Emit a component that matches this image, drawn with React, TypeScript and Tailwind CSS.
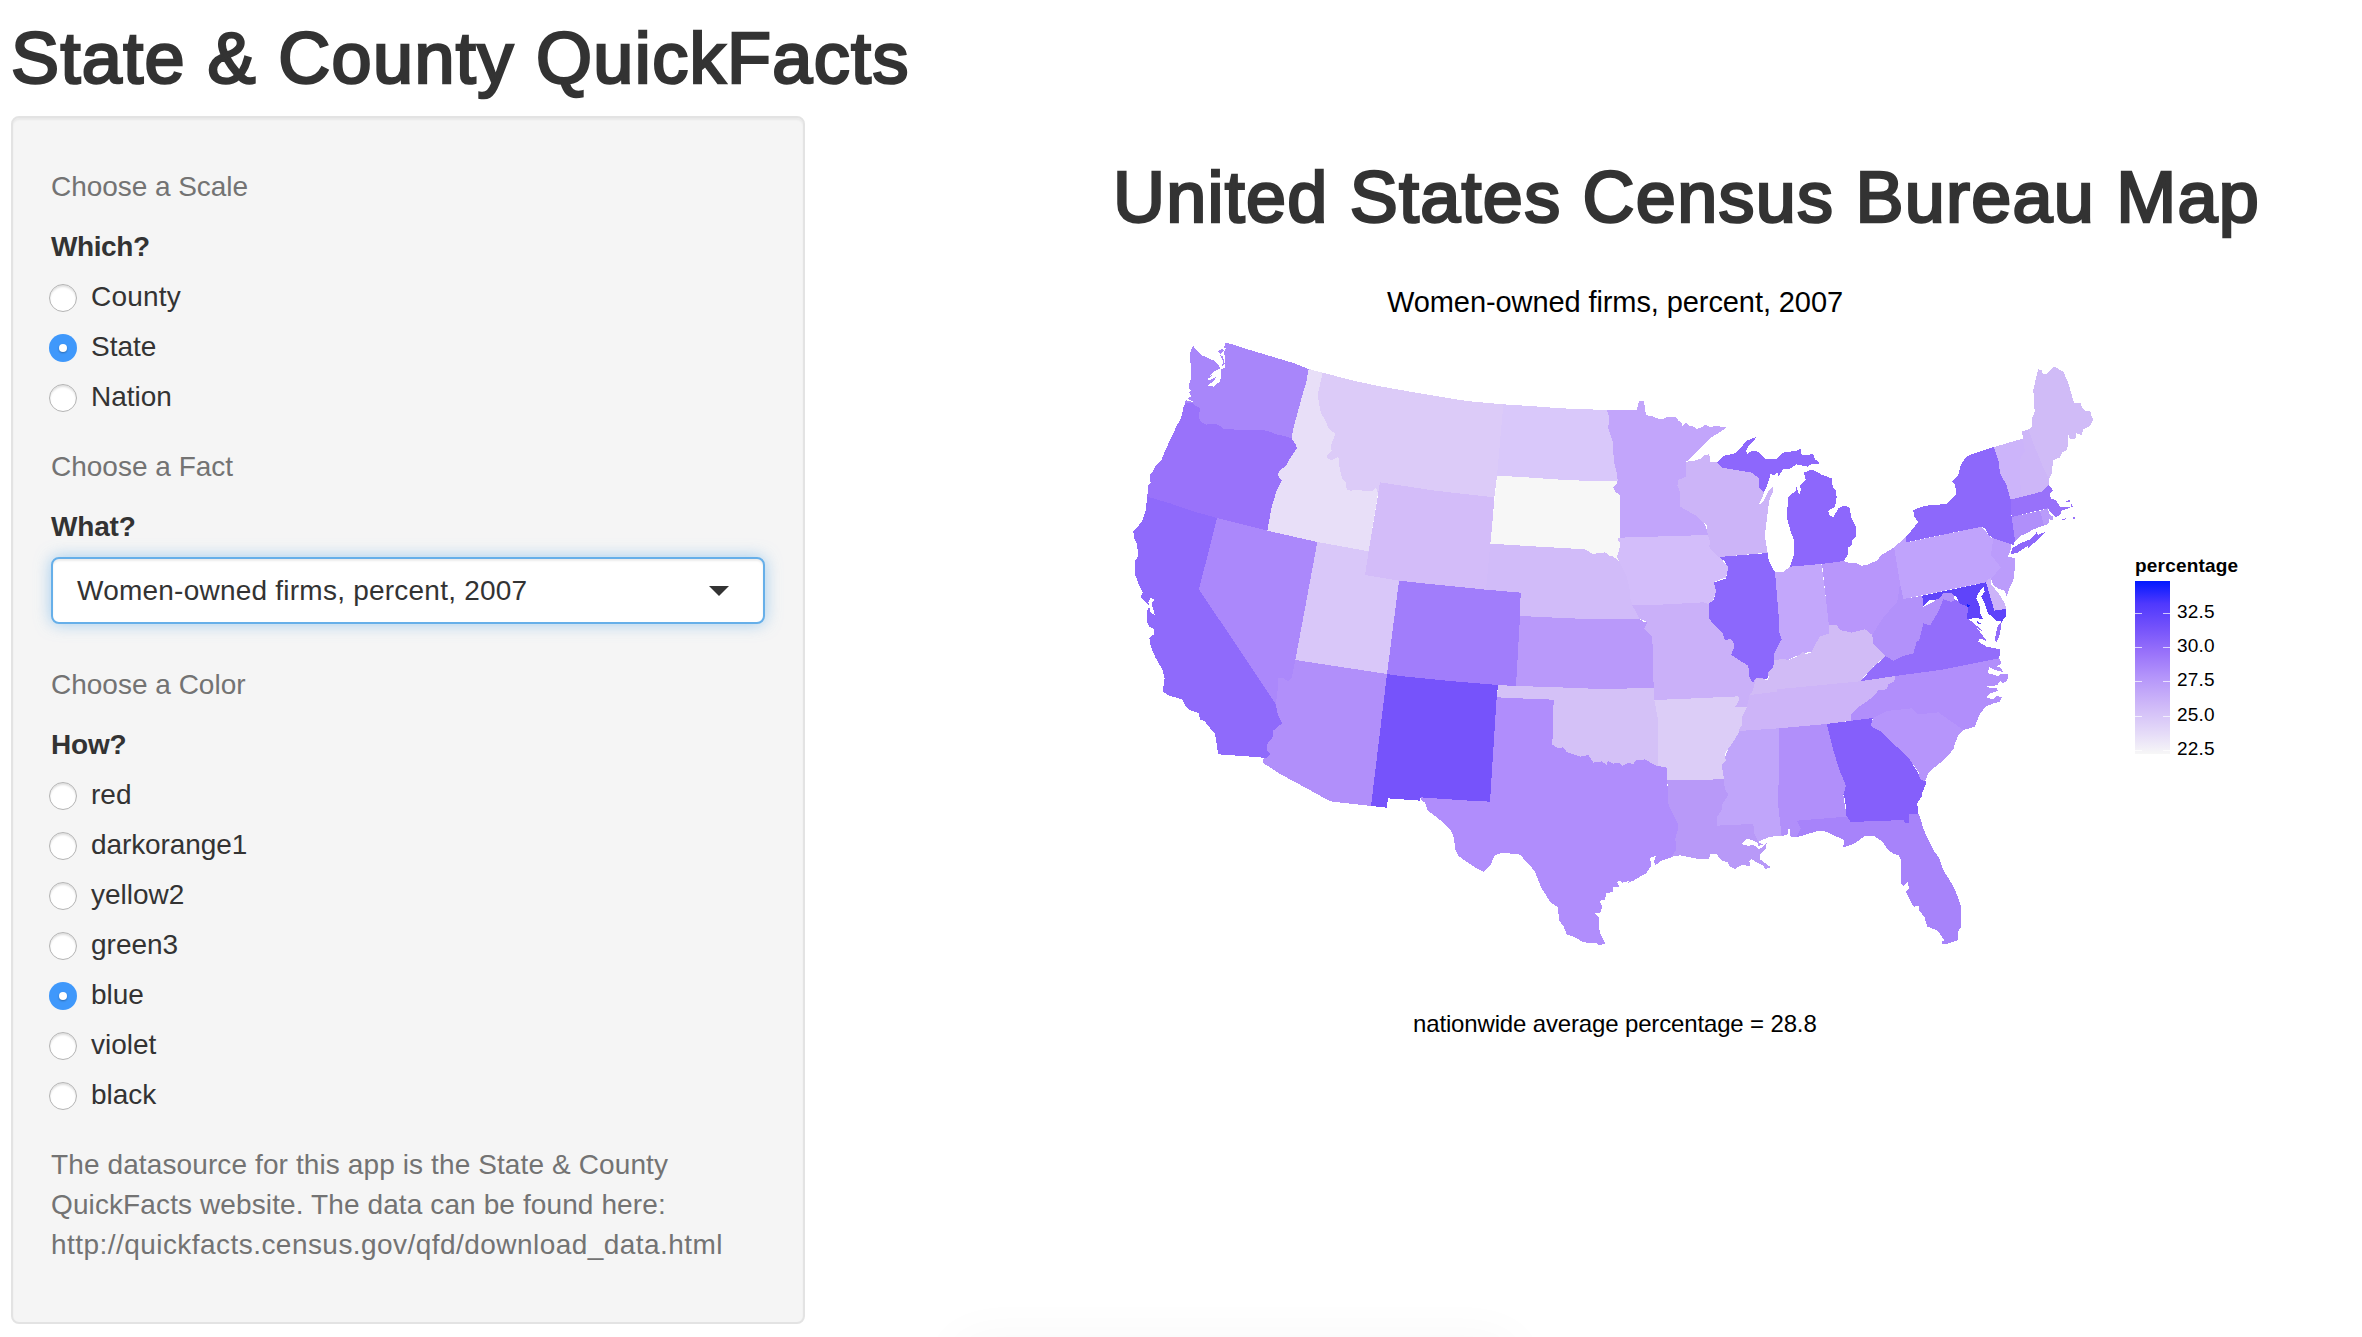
import React from "react";

type Shape = { id: string; fill: string; d: string };

// Contiguous states; later entries are painted over earlier ones.
const STATES: Shape[] = [
  { id: "OR", fill: "#9972fa", d: "M196 248 190 262 186 285 180 300 170 318 155 350 140 382 128 410 125 420 108 436 100 452 89 466 92 488 84 498 82 530 150 550 220 574 291 594 360 612 442 632 455 560 470 512 485 482 480 476 473 463 480 452 500 434 510 415 520 402 531 385 528 375 516 358 500 300 240 240Z" },
  { id: "WA", fill: "#a886fa", d: "M220 78 230 92 246 106 262 113 280 121 294 130 304 112 316 68 340 74 396 92 460 111 520 129 566 147 558 190 545 232 535 270 524 310 518 355 495 349 470 343 440 332 400 329 345 329 330 326 312 327 300 318 285 311 275 311 258 314 240 303 237 290 240 265 225 256 220 250 196 250 197 238 209 210 207 195 212 180 214 150 210 115 212 92Z" },
  { id: "ID", fill: "#e8dff8", d: "M566 147 608 158 593 225 600 265 602 277 615 300 626 325 646 342 633 375 635 393 622 405 622 413 633 421 655 410 660 452 668 478 677 485 680 508 690 512 710 510 730 512 760 512 768 503 774 520 746 694 592 666 442 632 455 560 470 512 485 482 480 476 473 463 480 452 500 434 510 415 531 385 528 375 516 358 518 335 524 310 535 270 545 232 558 190Z" },
  { id: "CA", fill: "#8f6afb", d: "M82 530 80 545 78 570 68 600 55 618 40 635 42 655 50 670 53 690 53 710 46 722 44 760 55 790 68 818 62 832 80 850 88 858 80 875 80 905 88 920 102 928 102 943 88 953 92 978 105 1010 128 1050 134 1075 128 1115 150 1128 187 1138 196 1157 210 1170 237 1180 240 1200 252 1202 285 1242 291 1280 295 1303 380 1309 440 1314 450 1302 440 1290 443 1268 457 1255 460 1232 486 1210 473 1182 467 1152 237 808 291 594 220 574 150 550Z" },
  { id: "AZ", fill: "#b18ffa", d: "M526 1020 801 1062 753 1458 630 1444 560 1405 480 1362 428 1328 430 1316 440 1314 450 1302 440 1290 443 1268 457 1255 460 1232 486 1210 473 1182 467 1152 472 1060Z" },
  { id: "NV", fill: "#ab88fb", d: "M291 594 442 632 592 666 582 720 526 1020 520 1050 515 1075 505 1084 490 1075 475 1075 472 1120 467 1152 237 808Z" },
  { id: "MT", fill: "#dccbf8", d: "M608 158 700 182 770 197 870 215 930 225 1040 243 1150 253 1131 468 1123 532 1050 524 930 510 880 502 780 487 774 520 768 503 760 512 730 512 710 510 690 512 680 508 677 485 668 478 660 452 655 410 633 421 622 413 622 405 635 393 633 375 646 342 626 325 615 300 602 277 600 265 593 225Z" },
  { id: "WY", fill: "#d3bcf9", d: "M780 487 880 502 930 510 1050 524 1123 532 1113 670 1098 809 930 792 837 782 735 765 746 694Z" },
  { id: "UT", fill: "#d9c7f9", d: "M592 666 746 694 735 765 837 782 801 1062 526 1020 582 720Z" },
  { id: "CO", fill: "#a17dfb", d: "M837 782 930 792 1098 809 1202 818 1200 888 1197 960 1188 1099 1134 1095 990 1083 840 1068 801 1062Z" },
  { id: "ND", fill: "#d9c8fa", d: "M1150 253 1230 258 1325 265 1460 270 1467 290 1465 325 1478 365 1480 400 1483 430 1491 460 1493 483 1385 482 1305 478 1131 468Z" },
  { id: "NE", fill: "#d1bbf9", d: "M1111 671 1490 690 1497 723 1520 770 1528 800 1530 830 1537 855 1558 896 1375 896 1285 892 1200 888 1202 818 1098 809Z" },
  { id: "SD", fill: "#f7f7f7", d: "M1131 468 1190 470 1305 478 1385 482 1493 483 1490 492 1480 502 1485 514 1500 526 1500 653 1492 656 1500 670 1498 690 1490 710 1497 723 1480 710 1470 708 1455 697 1430 700 1420 703 1395 688 1310 683 1240 679 1111 671Z" },
  { id: "MN", fill: "#c2a5fb", d: "M1460 270 1550 270 1557 244 1572 244 1578 285 1600 290 1620 298 1632 296 1640 290 1655 290 1670 293 1675 303 1683 305 1687 317 1697 308 1708 318 1722 320 1730 327 1745 322 1755 313 1770 321 1790 318 1820 322 1800 336 1770 355 1735 390 1705 420 1698 425 1710 500 1765 640 1763 645 1630 649 1500 653 1500 526 1485 514 1480 502 1490 492 1493 483 1491 460 1483 430 1480 400 1478 365 1465 325 1467 290Z" },
  { id: "KS", fill: "#b999fa", d: "M1200 888 1285 892 1375 896 1558 896 1570 905 1582 906 1572 926 1597 952 1601 1104 1440 1107 1290 1101 1188 1098Z" },
  { id: "TX", fill: "#b08dfc", d: "M1130 1132 1301 1139 1320 1250 1640 1320 1640 1343 1645 1452 1656 1468 1660 1485 1673 1510 1673 1530 1666 1555 1668 1590 1655 1612 1625 1622 1606 1635 1602 1625 1608 1608 1590 1613 1594 1636 1578 1660 1540 1682 1520 1690 1528 1683 1508 1688 1500 1682 1490 1686 1498 1700 1480 1702 1478 1716 1458 1720 1455 1740 1438 1742 1447 1760 1440 1780 1424 1780 1436 1790 1436 1810 1440 1840 1455 1870 1440 1877 1430 1870 1390 1867 1365 1852 1340 1843 1330 1818 1318 1802 1313 1762 1290 1745 1265 1705 1243 1652 1228 1635 1200 1604 1150 1598 1125 1605 1110 1638 1090 1655 1075 1648 1050 1632 1015 1608 1005 1585 1002 1555 993 1532 960 1500 922 1470 915 1448 902 1438 902 1430 1030 1438 1110 1445Z" },
  { id: "NM", fill: "#7653fb", d: "M801 1062 840 1068 990 1083 1134 1095 1130 1132 1110 1445 1030 1441 902 1432 900 1442 804 1435 800 1463 753 1458Z" },
  { id: "MO", fill: "#cab0f9", d: "M1537 856 1620 854 1750 847 1767 852 1850 880 1960 1060 1908 1092 1900 1120 1888 1135 1880 1162 1845 1162 1858 1140 1855 1129 1680 1137 1603 1140 1601 1104 1597 952 1572 926 1582 906 1558 896Z" },
  { id: "OK", fill: "#d4c1f7", d: "M1134 1095 1188 1098 1290 1101 1440 1107 1601 1104 1603 1140 1614 1200 1614 1340 1595 1330 1575 1318 1545 1322 1540 1332 1525 1328 1508 1337 1495 1328 1480 1331 1464 1322 1460 1334 1445 1324 1420 1328 1405 1305 1380 1310 1360 1303 1340 1296 1330 1282 1315 1285 1297 1274 1301 1139 1220 1136 1131 1132Z" },
  { id: "IA", fill: "#d3bdfa", d: "M1500 653 1630 649 1763 645 1770 665 1768 680 1775 692 1798 710 1825 742 1818 772 1782 786 1788 815 1780 840 1767 852 1750 847 1620 854 1537 856 1530 830 1528 800 1520 770 1497 723 1490 710 1498 690 1500 670 1492 656Z" },
  { id: "WI", fill: "#ccb4f8", d: "M1698 425 1720 423 1745 415 1752 406 1768 403 1770 425 1788 427 1800 427 1805 443 1860 450 1895 458 1917 475 1918 502 1931 517 1930 528 1915 555 1930 545 1945 515 1960 498 1960 512 1948 540 1942 585 1938 620 1934 645 1943 698 1797 711 1775 692 1768 680 1770 665 1763 645 1760 615 1740 600 1725 585 1680 560 1680 515 1672 498 1675 480 1698 470Z" },
  { id: "MS", fill: "#c0a5fa", d: "M1850 1225 1977 1222 1977 1460 1985 1548 1950 1550 1915 1565 1900 1540 1880 1530 1785 1520 1795 1360Z" },
  { id: "LA", fill: "#b899f8", d: "M1642 1380 1812 1378 1814 1405 1825 1425 1808 1450 1805 1470 1792 1490 1790 1517 1850 1514 1900 1512 1902 1540 1915 1565 1925 1573 1940 1570 1938 1585 1920 1605 1920 1618 1952 1642 1935 1648 1930 1636 1912 1628 1895 1618 1888 1622 1890 1638 1865 1635 1845 1647 1828 1638 1822 1626 1805 1622 1790 1603 1772 1602 1765 1618 1740 1618 1680 1606 1655 1610 1668 1590 1666 1555 1673 1530 1673 1510 1660 1485 1645 1452Z" },
  { id: "AR", fill: "#dccdf7", d: "M1603 1140 1680 1137 1855 1129 1858 1140 1845 1162 1880 1162 1865 1195 1866 1215 1855 1240 1840 1265 1815 1300 1817 1322 1805 1335 1812 1378 1680 1380 1642 1380 1640 1343 1614 1338 1614 1200Z" },
  { id: "IN", fill: "#c3a7fb", d: "M1964 756 1990 756 2010 740 2104 730 2128 915 2128 940 2100 950 2075 997 2050 998 2005 1020 1960 1035 1960 900Z" },
  { id: "OH", fill: "#b896fb", d: "M2106 730 2172 723 2190 730 2210 730 2225 737 2240 735 2270 722 2285 705 2322 682 2340 790 2345 850 2257 945 2195 945 2128 930Z" },
  { id: "NC", fill: "#b18efb", d: "M2193 1202 2193 1150 2300 1070 2325 1068 2460 1050 2638 1015 2645 1030 2630 1040 2640 1042 2650 1056 2625 1050 2606 1040 2605 1060 2635 1068 2640 1062 2665 1062 2662 1080 2650 1090 2640 1082 2632 1096 2600 1098 2610 1105 2630 1103 2634 1112 2612 1120 2600 1132 2618 1138 2630 1128 2645 1132 2640 1145 2615 1152 2598 1160 2580 1180 2572 1200 2565 1220 2530 1230 2400 1250 2258 1196Z" },
  { id: "TN", fill: "#cdb4f8", d: "M1855 1233 1866 1215 1865 1195 1880 1162 1890 1120 1970 1100 2220 1080 2325 1068 2323 1085 2305 1092 2300 1108 2275 1110 2262 1128 2240 1145 2220 1158 2206 1172 2193 1185 2193 1202 2120 1212 1977 1225Z" },
  { id: "KY", fill: "#d1bbf6", d: "M1890 1125 1898 1112 1903 1095 1908 1074 1945 1080 1950 1030 1963 1020 1990 1017 2005 1020 2030 1010 2050 995 2058 1003 2075 997 2085 975 2100 950 2128 940 2128 915 2150 915 2160 930 2195 938 2235 928 2257 945 2297 1008 2260 1040 2220 1084 1970 1108 1970 1115Z" },
  { id: "IL", fill: "#8c68fc", d: "M1797 711 1943 699 1946 720 1960 750 1965 756 1978 910 1976 930 1985 958 1970 985 1963 1000 1963 1025 1958 1045 1945 1058 1942 1077 1910 1073 1898 1088 1888 1070 1885 1037 1865 1025 1850 1015 1833 1005 1843 980 1840 965 1830 957 1815 962 1808 940 1780 912 1767 895 1766 850 1780 842 1788 815 1782 788 1818 775 1825 742 1812 722Z" },
  { id: "MI", fill: "#8d67fc", d: "M2010 740 2023 700 2022 660 2012 635 2000 590 2005 530 2028 512 2028 498 2038 525 2043 510 2040 495 2057 480 2052 458 2070 450 2085 452 2105 464 2135 475 2138 500 2147 510 2150 530 2145 560 2125 572 2127 585 2140 592 2155 565 2175 556 2190 565 2193 590 2208 620 2208 650 2196 660 2195 675 2185 682 2185 700 2172 723 2104 732ZM1790 427 1810 408 1845 400 1865 380 1880 362 1907 352 1905 360 1885 378 1878 392 1882 402 1895 393 1915 395 1935 416 1970 418 1990 398 2030 392 2042 387 2045 405 2080 403 2085 418 2102 430 2075 433 2062 440 2030 433 2010 446 1990 448 1980 462 1975 470 1972 458 1962 466 1952 462 1940 500 1931 517 1918 502 1917 475 1895 458 1805 443Z" },
  { id: "AL", fill: "#b18ffa", d: "M1977 1225 2120 1212 2140 1290 2158 1350 2178 1397 2170 1425 2180 1490 2060 1520 2030 1552 2012 1550 2007 1518 2002 1545 1985 1548 1975 1460Z" },
  { id: "FL", fill: "#a783fa", d: "M2030 1502 2180 1490 2300 1470 2394 1480 2400 1490 2408 1520 2420 1550 2440 1590 2458 1615 2470 1650 2495 1690 2513 1728 2523 1760 2523 1820 2515 1835 2515 1860 2480 1872 2465 1872 2465 1862 2475 1864 2460 1842 2450 1830 2422 1820 2413 1790 2397 1772 2398 1758 2382 1760 2375 1750 2358 1715 2368 1705 2362 1685 2352 1698 2342 1690 2344 1620 2335 1605 2320 1602 2300 1585 2288 1565 2260 1547 2235 1547 2205 1570 2170 1582 2172 1560 2150 1550 2120 1535 2095 1532 2070 1540 2030 1552 2042 1525Z" },
  { id: "GA", fill: "#855ffb", d: "M2120 1212 2258 1194 2252 1218 2280 1233 2330 1280 2370 1320 2400 1368 2410 1383 2420 1385 2408 1415 2405 1430 2392 1450 2394 1483 2368 1483 2368 1510 2355 1510 2352 1500 2192 1506 2178 1485 2176 1440 2170 1425 2178 1397 2158 1350 2140 1290Z" },
  { id: "SC", fill: "#b695fb", d: "M2260 1194 2300 1173 2375 1165 2395 1183 2455 1177 2530 1230 2515 1245 2505 1270 2500 1288 2485 1305 2465 1325 2440 1345 2425 1360 2415 1383 2400 1378 2395 1355 2370 1320 2330 1280 2280 1233 2252 1218Z" },
  { id: "VA", fill: "#936dfb", d: "M2220 1084 2262 1040 2297 1008 2370 920 2470 820 2545 860 2545 898 2560 908 2590 935 2572 925 2602 965 2580 955 2575 965 2600 980 2640 988 2638 1015 2460 1050 2325 1068ZM2645 905 2640 940 2630 968 2624 960 2628 925Z" },
  { id: "WV", fill: "#b291fa", d: "M2340 790 2350 837 2407 827 2410 860 2440 845 2470 820 2500 818 2503 840 2495 846 2470 838 2455 875 2440 900 2430 917 2410 910 2398 960 2390 965 2380 1000 2350 1008 2320 1022 2297 1008 2260 970 2257 945 2272 920 2292 890 2332 845Z" },
  { id: "PA", fill: "#c0a3fc", d: "M2357 652 2362 667 2585 620 2610 650 2620 657 2613 705 2643 743 2613 775 2598 787 2350 837 2340 790 2322 682Z" },
  { id: "MD", fill: "#5f44fa", d: "M2407 827 2598 787 2623 872 2658 867 2657 890 2645 905 2635 902 2610 908 2575 912 2565 895 2540 898 2545 862 2520 850 2508 830 2495 820 2470 820 2455 838 2430 840 2410 860Z" },
  { id: "DC", fill: "#0d20ff", d: "M2540 852 2550 855 2547 863 2540 860Z" },
  { id: "DE", fill: "#ccb3f9", d: "M2598 787 2605 776 2613 775 2612 792 2632 815 2655 850 2658 867 2623 872Z" },
  { id: "NJ", fill: "#bb9cfb", d: "M2620 655 2672 668 2672 690 2664 710 2684 714 2684 750 2680 780 2668 805 2660 830 2655 812 2635 806 2620 795 2613 775 2643 743 2613 705Z" },
  { id: "NY", fill: "#8d68fb", d: "M2358 667 2357 652 2380 625 2395 605 2382 590 2380 570 2415 557 2450 555 2480 551 2510 520 2505 495 2495 484 2512 470 2517 458 2522 435 2535 415 2548 405 2622 381 2635 420 2640 460 2650 480 2658 490 2672 540 2675 595 2687 655 2680 675 2620 655 2605 645 2595 625 2585 620ZM2672 702 2678 684 2700 670 2730 658 2750 637 2755 644 2775 636 2748 664 2725 684 2722 678 2692 699Z" },
  { id: "VT", fill: "#ccb4fa", d: "M2622 381 2708 356 2715 395 2702 410 2700 440 2705 531 2672 539 2658 490 2650 480 2640 460 2635 420Z" },
  { id: "NH", fill: "#cdb6f8", d: "M2708 356 2707 334 2725 328 2740 370 2775 455 2788 475 2786 495 2765 515 2705 531 2700 480 2700 440 2702 410 2715 395Z" },
  { id: "ME", fill: "#d0bbf7", d: "M2725 328 2735 322 2736 295 2744 275 2740 210 2750 165 2755 148 2765 150 2768 162 2780 162 2803 140 2830 155 2845 190 2862 248 2882 248 2886 262 2895 272 2912 275 2914 288 2921 297 2910 318 2890 328 2885 345 2868 340 2866 358 2850 356 2845 345 2842 390 2828 396 2820 412 2800 420 2795 460 2788 475 2775 455 2740 370Z" },
  { id: "MA", fill: "#9871fa", d: "M2672 539 2765 515 2786 495 2800 512 2790 520 2792 535 2808 540 2820 560 2852 560 2852 546 2835 544 2848 540 2858 560 2825 572 2820 585 2808 592 2795 580 2783 565 2675 591ZM2820 600 2838 594 2836 600ZM2858 590 2864 592 2864 597 2858 597Z" },
  { id: "CT", fill: "#b08ffa", d: "M2675 591 2760 572 2772 616 2740 628 2720 640 2700 648 2685 663Z" },
  { id: "RI", fill: "#b99bfa", d: "M2760 572 2783 565 2790 585 2800 590 2800 600 2788 598 2785 612 2772 616Z" },
];

// Sounds, bays and lakes that cut into the states.
const WATER = [
  "M318 86 310 96 316 110 316 142 304 148 302 175 298 186 280 200 263 196 278 186 290 170 266 182 264 176 285 160 264 172 286 152 300 145 294 132 280 121 302 118 304 100 294 90 312 82Z",
  "M196 240 204 208 214 210 208 218 214 228 204 236 220 246Z",
  "M85 848 92 834 104 840 95 850 104 884 92 878Z",
  "M1865 1572 1880 1556 1895 1560 1912 1568 1915 1578 1940 1570 1918 1588 1900 1574 1885 1578Z",
  "M2590 800 2575 820 2569 835 2580 860 2580 880 2590 898 2575 895 2552 893 2592 915 2565 912 2610 945 2580 935 2614 975 2640 985 2624 960 2632 920 2632 908 2620 892 2605 882 2594 850 2584 830 2594 815Z",
];

const ISLANDS = ["M294 94 306 86 312 92 300 102Z", "M300 106 308 108 314 130 304 142 310 124Z"];

function Radio({ label, checked, tracking = "" }: { label: string; checked?: boolean; tracking?: string }) {
  return (
    <label className="-ml-0.5 mb-2.5 flex h-10 items-center gap-[14px]">
      <span
        className={
          checked
            ? "mt-px flex size-7 items-center justify-center rounded-full bg-[#3f98fb]"
            : "mt-px size-7 rounded-full border border-[#b4b4b4] bg-white shadow-[inset_0_2px_2px_rgba(0,0,0,0.12)]"
        }
      >
        {checked && <span className="size-2 rounded-full bg-white shadow-[0_1px_2px_rgba(0,0,0,0.3)]" />}
      </span>
      <span className={tracking}>{label}</span>
    </label>
  );
}

function UsMap() {
  return (
    <svg viewBox="0 0 3000 1920" className="-mt-0.5 ml-[225px] block h-[640px] w-[1000px] shrink-0" shapeRendering="crispEdges">
      {STATES.map((s) => (
        <path key={s.id} d={s.d} fill={s.fill} />
      ))}
      {WATER.map((d) => (
        <path key={d} d={d} fill="#fff" />
      ))}
      {ISLANDS.map((d) => (
        <path key={d} d={d} fill="#a886fa" />
      ))}
    </svg>
  );
}

const TICKS = ["32.5", "30.0", "27.5", "25.0", "22.5"];

function Legend() {
  return (
    <div className="ml-[15px] mt-[233px] text-[19px] leading-[22px] text-black">
      <div className="tracking-[0.2px] font-bold">percentage</div>
      <div className="mt-[4px] flex">
        <div className="h-[173px] w-[35px] bg-[linear-gradient(to_bottom,#0018ff_0%,#4f38fd_13%,#7452fb_27%,#9871fa_41%,#b596fa_56%,#cfb9f8_72%,#e5dbf8_88%,#f7f7f7_100%)] pt-[32px]">
          {TICKS.map((t) => (
            <div key={t} className="flex h-[34.2px] justify-between">
              <span className="h-px w-[7px] bg-white/70" />
              <span className="h-px w-[7px] bg-white/70" />
            </div>
          ))}
        </div>
        <div className="ml-[7px] pt-[20px]">
          {TICKS.map((t) => (
            <div key={t} className="h-[34.2px] tracking-[0.2px]">{t}</div>
          ))}
        </div>
      </div>
    </div>
  );
}

export default function App() {
  return (
    <div className="relative h-[1337px] w-[2362px] overflow-hidden bg-white pl-[11px] pt-[19px] font-['Liberation_Sans',Arial,sans-serif] text-[28px] leading-10 text-[#333]">
      <h1 className="h-[97px] whitespace-nowrap text-[72px] leading-[79px] tracking-[1.38px] [-webkit-text-stroke:2.6px_#333]">
        <span>State &amp; County QuickFacts</span>
      </h1>
      <div className="flex">
        <aside className="h-[1208px] w-[794px] shrink-0 rounded-lg border-2 border-[#e3e3e3] bg-[#f5f5f5] px-[38px] pt-[49px] shadow-[inset_0_2px_2px_rgba(0,0,0,0.05)]">
          <p className="mb-5 tracking-[-0.05px] text-[#737373]"><span>Choose a Scale</span></p>
          <p className="mb-2.5 font-bold tracking-[-0.4px]"><span>Which?</span></p>
          <Radio label="County" tracking="tracking-[0.2px]" />
          <Radio label="State" checked />
          <Radio label="Nation" />
          <p className="mb-5 mt-[30px] text-[#737373]"><span>Choose a Fact</span></p>
          <p className="mb-2.5 font-bold tracking-[-0.2px]"><span>What?</span></p>
          <div className="flex h-[67px] items-center justify-between rounded-lg border-2 border-[#66afe9] bg-white pl-[24px] pr-[34px] shadow-[inset_0_2px_2px_rgba(0,0,0,0.075),0_0_16px_rgba(102,175,233,0.6)]">
            <span className="tracking-[0.23px]">Women-owned firms, percent, 2007</span>
            <span className="h-0 w-0 border-x-10 border-t-10 border-x-transparent border-t-[#333]" />
          </div>
          <p className="mb-5 mt-[41px] text-[#737373]"><span>Choose a Color</span></p>
          <p className="mb-2.5 font-bold tracking-[-0.2px]"><span>How?</span></p>
          <Radio label="red" />
          <Radio label="darkorange1" tracking="tracking-[-0.1px]" />
          <Radio label="yellow2" />
          <Radio label="green3" />
          <Radio label="blue" checked />
          <Radio label="violet" />
          <Radio label="black" />
          <p className="mt-[30px] whitespace-nowrap text-[#737373]">
            <span className="tracking-[0.11px]">The datasource for this app is the State &amp; County</span>
            <br />
            <span className="tracking-[0.11px]">QuickFacts website. The data can be found here:</span>
            <br />
            <span className="tracking-[0.45px]">http://quickfacts.census.gov/qfd/download_data.html</span>
          </p>
        </aside>
        <main className="flex w-[1465px] flex-col pl-[90px]">
          <h1 className="ml-[218px] mt-[42px] whitespace-nowrap text-[72px] leading-[79px] tracking-[1.24px] [-webkit-text-stroke:2.6px_#333]">
            <span>United States Census Bureau Map</span>
          </h1>
          <div className="ml-[492px] mt-[45px] h-10 text-[29px] leading-10 tracking-[-0.09px] text-black">
            <span>Women-owned firms, percent, 2007</span>
          </div>
          <div className="flex">
            <UsMap />
            <Legend />
          </div>
          <div className="ml-[518px] mt-[49px] text-[24px] leading-[30px] tracking-[-0.15px] text-black">
            <span>nationwide average percentage = 28.8</span>
          </div>
        </main>
      </div>
      <div className="absolute left-[960px] top-[1345px] h-10 w-[550px] rounded-full shadow-[0_0_50px_10px_rgba(0,0,0,0.03)]" />
    </div>
  );
}
